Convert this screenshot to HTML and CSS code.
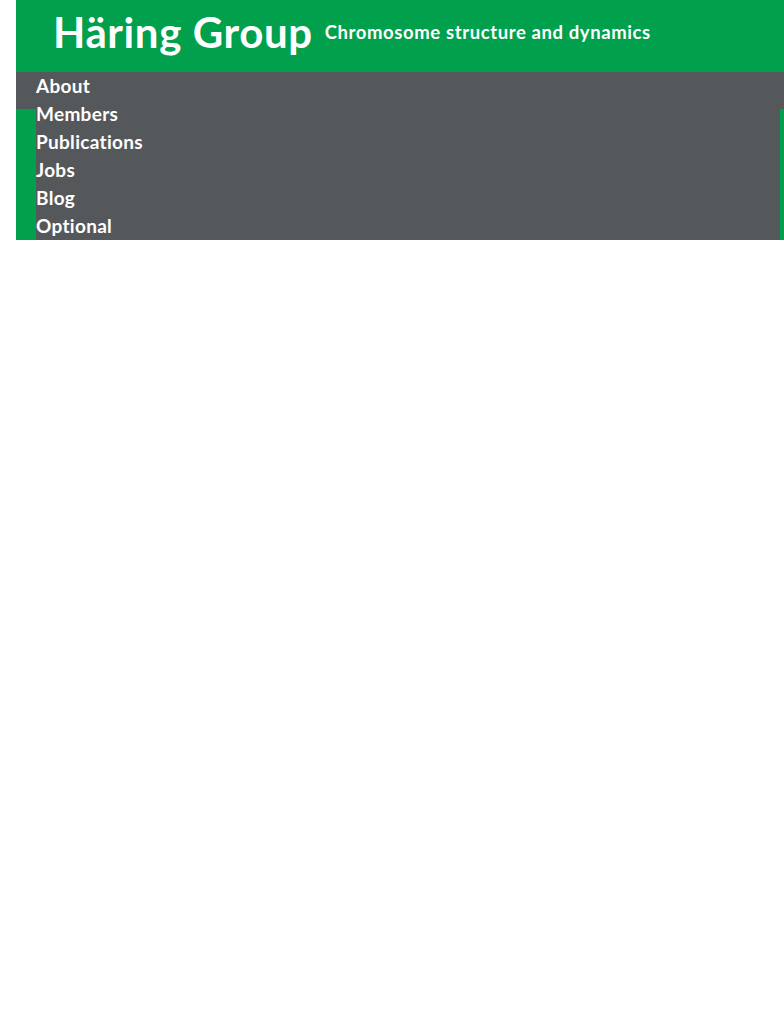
FILE: index.html
```html
<!DOCTYPE html>
<html lang="en">
<head>
<meta charset="utf-8">
<title>Häring Group</title>
<link rel="stylesheet" href="styles.css">
</head>
<body>
<div class="site">
  <header class="masthead">
    <h1 class="title">Häring Group</h1>
    <span class="tagline">Chromosome structure and dynamics</span>
  </header>
  <nav class="nav">
    <ul class="nav-list">
      <li><a href="#">About</a></li>
      <li><a href="#">Members</a></li>
      <li><a href="#">Publications</a></li>
      <li><a href="#">Jobs</a></li>
      <li><a href="#">Blog</a></li>
      <li><a href="#">Optional</a></li>
    </ul>
  </nav>
</div>
</body>
</html>
```
FILE: styles.css
```css
html, body {
  margin: 0;
  padding: 0;
  background: #ffffff;
}
body {
  font-family: Lato, "Noto Sans", sans-serif;
  font-variant-ligatures: none;
}
.site {
  margin-left: 16px;
  background: #00a04c;
}
.masthead {
  height: 72px;
  box-sizing: border-box;
  display: flex;
  align-items: flex-start;
  gap: 12px;
  padding-left: 37px;
  color: #ffffff;
}
.title {
  margin: 0;
  font-size: 42px;
  font-weight: 700;
  line-height: 65px;
  letter-spacing: 0.6px;
}
.tagline {
  font-size: 18.5px;
  font-weight: 700;
  line-height: 20px;
  margin-top: 22px;
  letter-spacing: 0.6px;
}
.nav {
  background:
    linear-gradient(#00a04c, #00a04c) left 37px / 20px calc(100% - 37px) no-repeat,
    linear-gradient(#00a04c, #00a04c) right 37px / 4px calc(100% - 37px) no-repeat,
    #55585b;
}
.nav-list {
  list-style: none;
  margin: 0;
  padding: 0 0 0 20px;
}
.nav-list a {
  display: block;
  color: #ffffff;
  text-decoration: none;
  font-size: 19px;
  font-weight: 700;
  line-height: 28px;
  letter-spacing: 0.3px;
}
```
